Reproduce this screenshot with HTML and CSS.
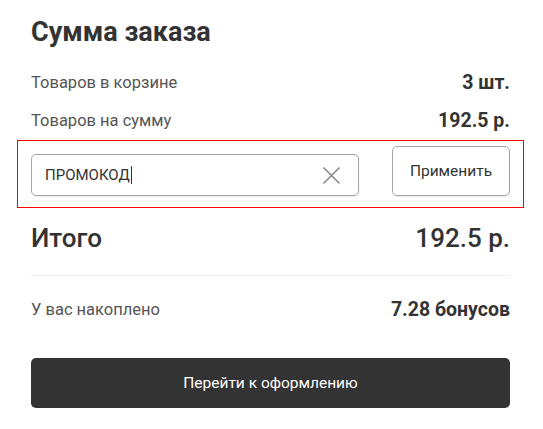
FILE: index.html
```html
<!DOCTYPE html>
<html lang="ru">
<head>
<meta charset="utf-8">
<link rel="stylesheet" href="styles.css">
</head>
<body>
<div class="summary">
  <h2 class="title">Сумма заказа</h2>
  <div class="row">
    <span class="label">Товаров в корзине</span>
    <span class="value">3 шт.</span>
  </div>
  <div class="row">
    <span class="label">Товаров на сумму</span>
    <span class="value">192.5 р.</span>
  </div>
  <div class="promo">
    <div class="promo-input">
      <span class="promo-text">ПРОМОКОД</span><span class="caret"></span>
      <svg class="clear" width="19" height="19" viewBox="0 0 19 19"><path d="M1.5 1.5 L17.5 17.5 M17.5 1.5 L1.5 17.5" stroke="#8a8a8a" stroke-width="1.6" fill="none"/></svg>
    </div>
    <button class="apply">Применить</button>
  </div>
  <div class="total">
    <span>Итого</span>
    <span>192.5 р.</span>
  </div>
  <div class="bonus">
    <span class="label">У вас накоплено</span>
    <span class="value">7.28 бонусов</span>
  </div>
  <button class="checkout">Перейти к оформлению</button>
</div>
</body>
</html>
```
FILE: styles.css
```css
html, body {
  margin: 0;
  background: #fff;
}
body {
  font-family: Roboto, "Liberation Sans", Arial, sans-serif;
  color: #333;
}
.summary {
  padding: 14px 33px 20px 31px;
  display: flex;
  flex-direction: column;
}
.title {
  margin: 0;
  font-size: 27px;
  font-weight: 700;
  line-height: 36px;
  color: #333;
}
.row {
  display: flex;
  justify-content: space-between;
  align-items: center;
  height: 38px;
}
.row:first-of-type {
  margin-top: 13px;
}
.label {
  font-size: 16.5px;
  color: #555;
}
.value {
  font-size: 19.5px;
  font-weight: 700;
  color: #333;
}
.promo {
  margin: 1px -14px 0;
  border: 1px solid #f00;
  padding: 5px 13px 11px;
  display: flex;
  align-items: flex-end;
  gap: 33px;
}
.promo-input {
  flex: 1;
  height: 42px;
  box-sizing: border-box;
  border: 1px solid #a5a5a5;
  border-radius: 5px;
  display: flex;
  align-items: center;
  padding: 0 17px 0 13px;
  box-shadow: 0 1px 1px rgba(0,0,0,0.08);
}
.promo-text {
  font-size: 15px;
  color: #333;
}
.caret {
  width: 1px;
  height: 18px;
  background: #333;
  margin-left: 1px;
}
.clear {
  margin-left: auto;
}
.apply {
  width: 118px;
  height: 50px;
  box-sizing: border-box;
  border: 1px solid #a5a5a5;
  border-radius: 5px;
  background: #fff;
  font-family: inherit;
  font-size: 15.5px;
  color: #333;
  box-shadow: 0 1px 1px rgba(0,0,0,0.08);
}
.total {
  display: flex;
  justify-content: space-between;
  align-items: center;
  font-size: 26px;
  font-weight: 500;
  color: #333;
  height: 59px;
  border-bottom: 1px solid #eee;
  padding-bottom: 8px;
}
.bonus {
  display: flex;
  justify-content: space-between;
  align-items: center;
  height: 66px;
}
.checkout {
  margin-top: 16px;
  height: 50px;
  border: none;
  border-radius: 5px;
  background: #333;
  color: #fff;
  font-family: inherit;
  font-size: 15.5px;
}
```
